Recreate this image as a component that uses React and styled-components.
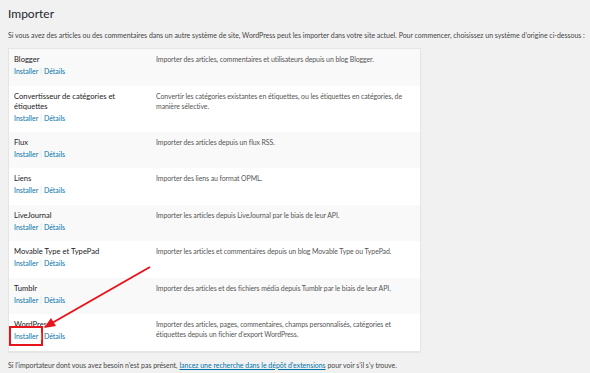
import React from "react";
import styled, { createGlobalStyle } from "styled-components";

const importers = [
  { name: "Blogger", desc: "Importer des articles, commentaires et utilisateurs depuis un blog Blogger." },
  { name: "Convertisseur de catégories et étiquettes", desc: "Convertir les catégories existantes en étiquettes, ou les étiquettes en catégories, de manière sélective." },
  { name: "Flux", desc: "Importer des articles depuis un flux RSS." },
  { name: "Liens", desc: "Importer des liens au format OPML." },
  { name: "LiveJournal", desc: "Importer les articles depuis LiveJournal par le biais de leur API." },
  { name: "Movable Type et TypePad", desc: "Importer les articles et commentaires depuis un blog Movable Type ou TypePad." },
  { name: "Tumblr", desc: "Importer des articles et des fichiers média depuis Tumblr par le biais de leur API." },
  { name: "WordPress", desc: "Importer des articles, pages, commentaires, champs personnalisés, catégories et étiquettes depuis un fichier d’export WordPress.", highlight: true },
];

const App = () => {
  return (
    <>
      <GlobalStyle />
      <Page>
        <Title>Importer</Title>
        <Intro>
          Si vous avez des articles ou des commentaires dans un autre système de site, WordPress peut les importer dans votre site actuel. Pour commencer, choisissez un système d’origine ci-dessous :
        </Intro>
        <Table>
          {importers.map((item, i) => (
            <Row key={item.name} striped={i % 2 === 0}>
              <NameCell>
                <Name>{item.name}</Name>
                <Actions>
                  <Link highlight={item.highlight}>Installer</Link>
                  <Sep>|</Sep>
                  <Link>Détails</Link>
                </Actions>
              </NameCell>
              <Desc>{item.desc}</Desc>
            </Row>
          ))}
        </Table>
        <Footer>
          Si l’importateur dont vous avez besoin n’est pas présent, <FooterLink>lancez une recherche dans le dépôt d’extensions</FooterLink> pour voir s’il s’y trouve.
        </Footer>
        <Arrow width="590" height="373" viewBox="0 0 590 373">
          <line x1="150" y1="267" x2="52" y2="323" stroke="#e8141b" strokeWidth="2" />
          <polygon points="44,328 51,318 56,326" fill="#e8141b" />
        </Arrow>
      </Page>
    </>
  );
};

export default App;

const GlobalStyle = createGlobalStyle`
  body {
    margin: 0;
    background: #f1f1f1;
    font-family: Lato, "Open Sans", sans-serif;
    color: #444;
  }
`;

const Page = styled.div`
  position: relative;
  width: 590px;
  height: 373px;
  padding: 6px 8px 0 8px;
  box-sizing: border-box;
  overflow: hidden;
`;

const Title = styled.h1`
  margin: 0;
  font-size: 12px;
  line-height: 15px;
  font-weight: 400;
  color: #23282d;
`;

const Intro = styled.p`
  margin: 9px 0 8px 0;
  font-size: 6.95px;
  line-height: 10px;
  color: #444;
  white-space: nowrap;
`;

const Table = styled.div`
  width: 413px;
  background: #fff;
  border: 1px solid #e5e5e5;
  box-shadow: 0 1px 1px rgba(0, 0, 0, 0.04);
  box-sizing: border-box;
`;

const Row = styled.div`
  display: grid;
  grid-template-columns: 138px 1fr;
  background: ${(p) => (p.striped ? "#f9f9f9" : "#fff")};
  min-height: 36.5px;
`;

const NameCell = styled.div`
  padding: 5px 6px 9px 5px;
`;

const Name = styled.div`
  font-size: 7.6px;
  line-height: 10px;
  color: #1d2125;
`;

const Actions = styled.div`
  display: flex;
  align-items: center;
  margin-top: 2px;
  font-size: 6.95px;
  line-height: 10px;
`;

const Link = styled.span`
  color: #0073aa;
  outline: ${(p) => (p.highlight ? "2px solid #e8141b" : "none")};
  outline-offset: ${(p) => (p.highlight ? "3px" : "0")};
`;

const Sep = styled.span`
  color: #ddd;
  margin: 0 2px;
`;

const Desc = styled.div`
  padding: 5px 0 6px 9px;
  font-size: 6.95px;
  letter-spacing: -0.08px;
  line-height: 10px;
  color: #555;
`;

const Footer = styled.p`
  margin: 8px 0 0 0;
  font-size: 6.95px;
  line-height: 10px;
  color: #444;
`;

const FooterLink = styled.span`
  color: #0073aa;
  text-decoration: underline;
`;

const Arrow = styled.svg`
  position: absolute;
  left: 0;
  top: 0;
  pointer-events: none;
`;
